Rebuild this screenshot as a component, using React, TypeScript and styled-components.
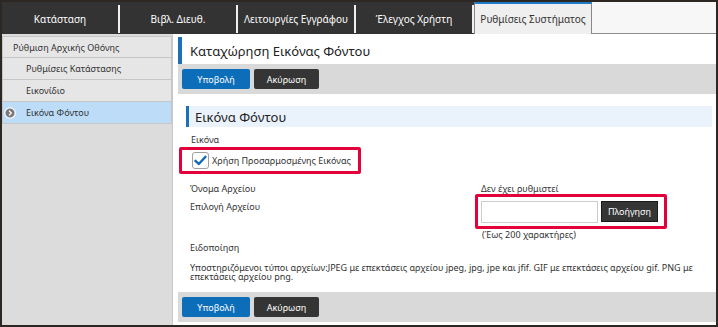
import * as React from 'react';
import styled, { createGlobalStyle } from 'styled-components';

const GlobalStyle = createGlobalStyle`
	html, body {
		margin: 0;
		padding: 0;
		background: #ffffff;
	}
	body {
		font-family: 'Noto Sans', 'DejaVu Sans', sans-serif;
		font-size: 9px;
		color: #333333;
	}
`;

const Frame = styled.div`
	width: 718px;
	height: 327px;
	box-sizing: border-box;
	border: 2px solid #2d2724;
	display: flex;
	flex-direction: column;
	overflow: hidden;
	background: #ffffff;
`;

const TabBar = styled.div`
	display: flex;
	height: 32px;
	flex-shrink: 0;
`;

const Tab = styled.div<{ $active?: boolean }>`
	width: 118px;
	box-sizing: border-box;
	display: flex;
	align-items: center;
	justify-content: center;
	font-size: 10px;
	color: ${(p) => (p.$active ? '#333333' : '#ffffff')};
	background: ${(p) => (p.$active ? '#efefef' : '#333333')};
	border-top: ${(p) => (p.$active ? '2px solid #1e7bc9' : '1px solid #333333')};
	border-left: ${(p) => (p.$active ? '1px solid #888888' : 'none')};
	border-right: ${(p) => (p.$active ? '1px solid #888888' : '2px solid #333333')};
	position: relative;
	&::after {
		content: '';
		display: ${(p) => (p.$active ? 'none' : 'block')};
		position: absolute;
		right: -2px;
		top: 2px;
		bottom: 1px;
		width: 2px;
		background: #f0f0f0;
	}
`;

const TabRest = styled.div`
	flex: 1;
	background: #f7f7f7;
	border-bottom: 1px solid #8c8c8c;
`;

const Body = styled.div`
	display: flex;
	flex: 1;
	min-height: 0;
`;

const Sidebar = styled.div`
	width: 171px;
	flex-shrink: 0;
	background: #dcdcdc;
	border-right: 1px solid #c8c8c8;
	padding-top: 2px;
	box-sizing: border-box;
`;

const NavItem = styled.div<{ $level: number; $selected?: boolean }>`
	height: 22px;
	box-sizing: border-box;
	display: flex;
	align-items: center;
	padding-left: ${(p) => (p.$level === 0 ? 10 : 23)}px;
	position: relative;
	background: ${(p) => (p.$selected ? '#bcdcf8' : '#e6e6e6')};
	border: 1px solid #c6c6c6;
	border-top: none;
	&:first-child {
		border-top: 1px solid #c6c6c6;
	}
	color: #333333;
`;

const NavIcon = styled.svg`
	position: absolute;
	left: 1px;
	top: 5px;
`;

const Main = styled.div`
	flex: 1;
	padding: 2px 0 3px 5px;
	display: flex;
	flex-direction: column;
	min-width: 0;
`;

const PageHeader = styled.div`
	display: flex;
	height: 27px;
	margin-top: 1px;
	align-items: stretch;
`;

const PageTitle = styled.div`
	background: #ffffff;
	border-left: 4px solid #1d6fb8;
	padding: 0 10px 0 8px;
	width: 218px;
	box-sizing: border-box;
	display: flex;
	align-items: center;
	font-size: 13px;
	color: #222222;
	white-space: nowrap;
`;

const ButtonBar = styled.div`
	display: flex;
	gap: 4px;
	background: #d9d9d9;
	padding: 5px 4px;
	height: 30px;
	box-sizing: border-box;
	align-items: center;
`;

const Button = styled.button<{ $variant: 'primary' | 'dark' }>`
	height: 20px;
	min-width: ${(p) => (p.$variant === 'primary' ? 68 : 65)}px;
	border: none;
	border-radius: 2px;
	background: ${(p) => (p.$variant === 'primary' ? '#0c6eb9' : '#353535')};
	color: #ffffff;
	font-family: inherit;
	font-size: 9px;
	padding: 0 8px;
	cursor: pointer;
`;

const Section = styled.div`
	flex: 1;
	padding: 12px 4px 0 8px;
`;

const SectionTitle = styled.div`
	height: 21px;
	display: flex;
	align-items: center;
	background: #eaf2fc;
	border-left: 3px solid #1d6fb8;
	padding-left: 6px;
	font-size: 13px;
	color: #222222;
`;

const FieldLabel = styled.div`
	margin: 7px 0 0 5px;
	line-height: 12px;
`;

const Highlight = styled.div`
	border: 3px solid #e4003b;
	border-radius: 2px;
	box-sizing: border-box;
`;

const CheckHighlight = styled(Highlight)`
	width: 182px;
	height: 27px;
	margin: 1px 0 0 -7px;
	display: flex;
	align-items: center;
	padding-left: 10px;
	gap: 3px;
	white-space: nowrap;
`;

const CheckBox = styled.span`
	width: 15px;
	height: 15px;
	flex-shrink: 0;
	border: 1px solid #a0a0a0;
	border-radius: 3px;
	background: #ffffff;
	display: flex;
	align-items: center;
	justify-content: center;
`;

const FormGrid = styled.div`
	display: grid;
	grid-template-columns: 291px 1fr;
	margin-left: 4px;
	margin-top: 9px;
`;

const Cell = styled.div<{ $pad?: number }>`
	line-height: 12px;
	padding-top: ${(p) => p.$pad || 0}px;
`;

const FileHighlight = styled(Highlight)`
	width: 192px;
	height: 35px;
	margin: -1px 0 0 -6px;
	display: flex;
	align-items: center;
	padding-left: 3px;
	gap: 3px;
`;

const TextInput = styled.div`
	width: 117px;
	height: 22px;
	border: 1px solid #cccccc;
	box-sizing: border-box;
	background: #ffffff;
`;

const BrowseButton = styled.div`
	width: 57px;
	height: 21px;
	background: #353535;
	color: #ffffff;
	display: flex;
	align-items: center;
	justify-content: center;
	border: 1px solid #1a1a1a;
	box-sizing: border-box;
`;

const Hint = styled.div`
	margin: 0 0 0 1px;
	line-height: 12px;
`;

const Notice = styled.div`
	margin: 1px 0 0 4px;
	line-height: 12px;
`;

const NoticeText = styled.div`
	margin: 9px 0 0 4px;
	line-height: 9px;
	white-space: nowrap;
`;

function CircleArrow() {
	return (
		<NavIcon width="12" height="12" viewBox="0 0 12 12">
			<circle cx="6" cy="6" r="5.2" fill="#7a7a7a" stroke="#ffffff" strokeWidth="1.2" />
			<path d="M5 3.6 L7.3 6 L5 8.4" fill="none" stroke="#ffffff" strokeWidth="1.3" />
		</NavIcon>
	);
}

export default function App() {
	return (
		<>
			<GlobalStyle />
			<Frame>
				<TabBar>
					<Tab>Κατάσταση</Tab>
					<Tab>Βιβλ. Διευθ.</Tab>
					<Tab>Λειτουργίες Εγγράφου</Tab>
					<Tab>Έλεγχος Χρήστη</Tab>
					<Tab $active>Ρυθμίσεις Συστήματος</Tab>
					<TabRest />
				</TabBar>
				<Body>
					<Sidebar>
						<NavItem $level={0}>Ρύθμιση Αρχικής Οθόνης</NavItem>
						<NavItem $level={1}>Ρυθμίσεις Κατάστασης</NavItem>
						<NavItem $level={1}>Εικονίδιο</NavItem>
						<NavItem $level={1} $selected>
							<CircleArrow />
							Εικόνα Φόντου
						</NavItem>
					</Sidebar>
					<Main>
						<PageHeader>
							<PageTitle>Καταχώρηση Εικόνας Φόντου</PageTitle>
						</PageHeader>
						<ButtonBar>
							<Button $variant="primary">Υποβολή</Button>
							<Button $variant="dark">Ακύρωση</Button>
						</ButtonBar>
						<Section>
							<SectionTitle>Εικόνα Φόντου</SectionTitle>
							<FieldLabel>Εικόνα</FieldLabel>
							<CheckHighlight>
								<CheckBox>
									<svg width="13" height="11" viewBox="0 0 13 11">
										<path d="M1.5 5.8 L4.8 9 L11.5 1.8" fill="none" stroke="#1168b8" strokeWidth="2.4" strokeLinecap="round" strokeLinejoin="round" />
									</svg>
								</CheckBox>
								<span>Χρήση Προσαρμοσμένης Εικόνας</span>
							</CheckHighlight>
							<FormGrid>
								<Cell>Όνομα Αρχείου</Cell>
								<Cell>Δεν έχει ρυθμιστεί</Cell>
								<Cell $pad={6}>Επιλογή Αρχείου</Cell>
								<Cell>
									<FileHighlight>
										<TextInput />
										<BrowseButton>Πλοήγηση</BrowseButton>
									</FileHighlight>
									<Hint>(Έως 200 χαρακτήρες)</Hint>
								</Cell>
							</FormGrid>
							<Notice>Ειδοποίηση</Notice>
							<NoticeText>
								Υποστηριζόμενοι τύποι αρχείων:JPEG με επεκτάσεις αρχείου jpeg, jpg, jpe και jfif. GIF με επεκτάσεις αρχείου gif. PNG με
								<br />
								επεκτάσεις αρχείου png.
							</NoticeText>
						</Section>
						<ButtonBar>
							<Button $variant="primary">Υποβολή</Button>
							<Button $variant="dark">Ακύρωση</Button>
						</ButtonBar>
					</Main>
				</Body>
			</Frame>
		</>
	);
}
